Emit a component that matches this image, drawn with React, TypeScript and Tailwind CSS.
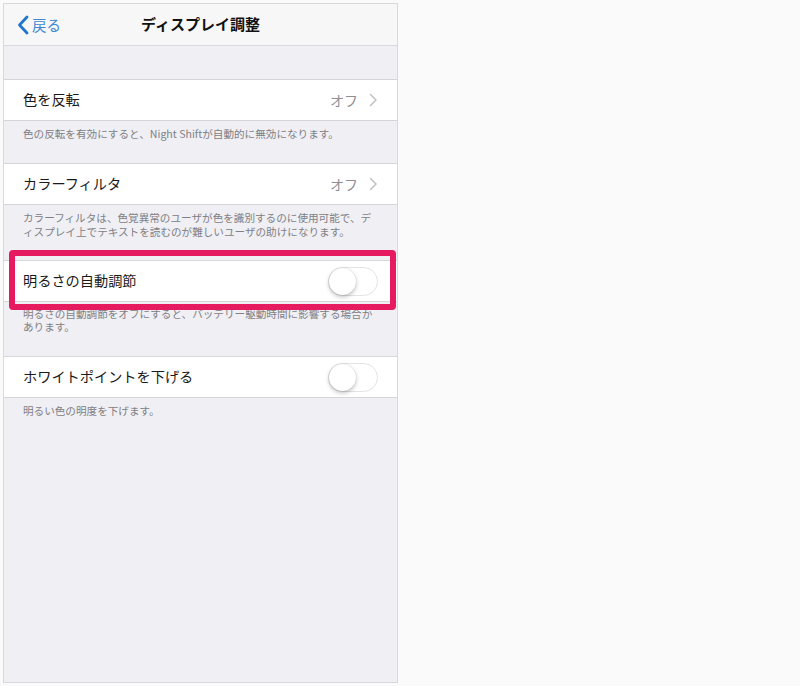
import React from "react";

const font = { fontFamily: '"Noto Sans CJK JP", "Noto Sans", sans-serif' };

function Toggle() {
  return (
    <div className="relative w-[50px] h-[29px] rounded-full border border-[#e3e3e6] bg-white">
      <div className="absolute left-[0px] top-[0px] w-[27px] h-[27px] rounded-full bg-white shadow-[0_2px_4px_rgba(0,0,0,0.25),0_0_1px_rgba(0,0,0,0.2)]" />
    </div>
  );
}

function Chevron() {
  return (
    <svg width="9" height="14" viewBox="0 0 9 14" className="ml-[11px]">
      <path d="M1.5 1.5 L7 7 L1.5 12.5" fill="none" stroke="#c4c4c8" strokeWidth="1.6" strokeLinecap="round" strokeLinejoin="round" />
    </svg>
  );
}

function Row({ label, right }: { label: string; right: React.ReactNode }) {
  return (
    <div className="h-[42px] bg-white border-y border-[#d6d6da] flex items-center pl-[19px] pr-[19px]">
      <span className="text-[14.2px] text-[#1a1a1a] flex-1">{label}</span>
      {right}
    </div>
  );
}

function Off() {
  return (
    <div className="flex items-center">
      <span className="text-[14px] text-[#8e8e93]">オフ</span>
      <Chevron />
    </div>
  );
}

export default function App() {
  return (
    <div className="w-[800px] h-[686px] bg-[#fafafa] pt-[3px] pl-[3px]" style={font}>
      <div className="w-[395px] h-[680px] border border-[#d9d9dc] bg-[#efeff4] relative overflow-visible">
        {/* nav */}
        <div className="h-[42px] bg-[#f7f7f8] border-b border-[#d9d9dc] flex items-center relative">
          <div className="flex items-center pl-[13px]">
            <svg width="12" height="20" viewBox="0 0 12 20">
              <path d="M10 2 L2.5 10 L10 18" fill="none" stroke="#1f76cc" strokeWidth="2.8" strokeLinecap="round" strokeLinejoin="round" />
            </svg>
            <span className="ml-[3px] text-[14.5px] text-[#3d8ad3]">戻る</span>
          </div>
          <div className="absolute inset-0 flex items-center justify-center">
            <span className="text-[15px] font-bold text-[#111]">ディスプレイ調整</span>
          </div>
        </div>

        <div className="h-[33px]" />

        <Row label="色を反転" right={<Off />} />
        <div className="h-[42px] pl-[19px] pt-[6px] text-[10.6px] leading-[14px] text-[#808085] whitespace-nowrap">
          色の反転を有効にすると、Night Shiftが自動的に無効になります。
        </div>

        <Row label="カラーフィルタ" right={<Off />} />
        <div className="h-[55px] pl-[19px] pt-[6px] text-[10.6px] leading-[14px] text-[#808085] whitespace-nowrap">
          カラーフィルタは、色覚異常のユーザが色を識別するのに使用可能で、デ
          <br />
          ィスプレイ上でテキストを読むのが難しいユーザの助けになります。
        </div>

        <div className="relative">
          <Row label="明るさの自動調節" right={<Toggle />} />
          <div className="absolute left-[5px] top-[-10px] w-[387px] h-[60px] border-[6px] border-[#e61a5e] rounded-[4px]" />
        </div>
        <div className="h-[54px] pl-[19px] pt-[5px] text-[10.6px] leading-[13px] text-[#808085] whitespace-nowrap">
          明るさの自動調節をオフにすると、バッテリー駆動時間に影響する場合か
          <br />
          あります。
        </div>

        <Row label="ホワイトポイントを下げる" right={<Toggle />} />
        <div className="pl-[19px] pt-[6px] text-[10.6px] leading-[14px] text-[#808085] whitespace-nowrap">
          明るい色の明度を下げます。
        </div>
      </div>
    </div>
  );
}
